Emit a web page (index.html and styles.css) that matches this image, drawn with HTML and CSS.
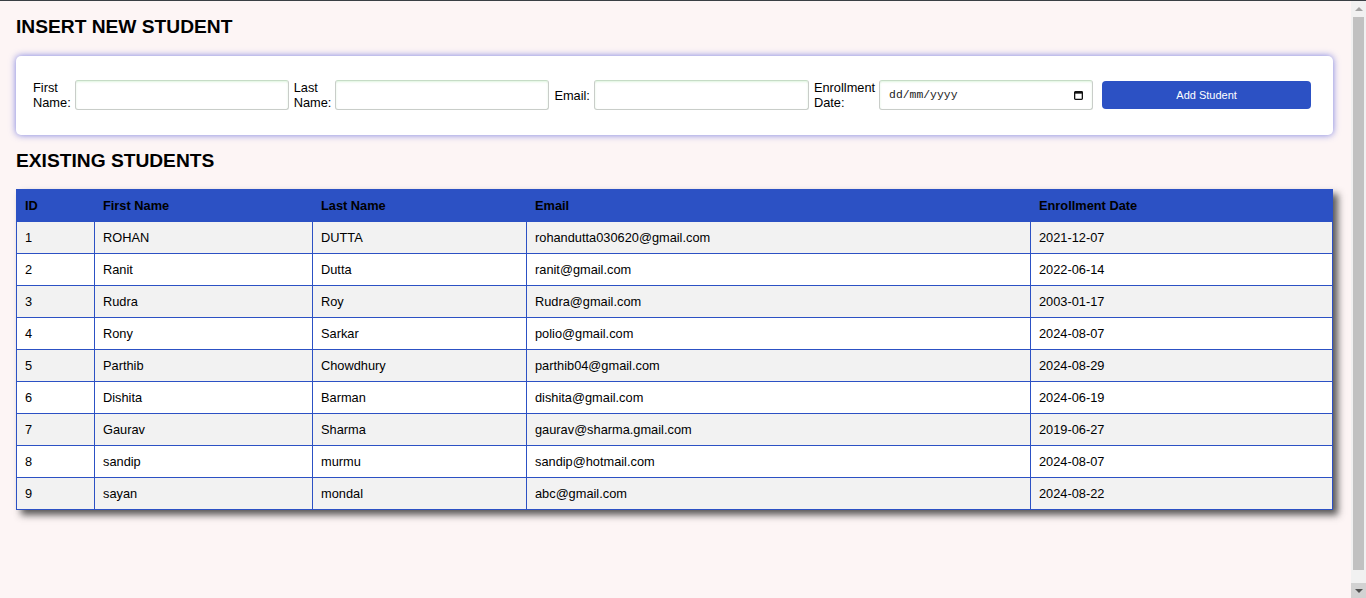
FILE: index.html
```html
<!DOCTYPE html>
<html lang="en">
<head>
<meta charset="utf-8">
<title>Students</title>
<link rel="stylesheet" href="styles.css">
</head>
<body>
<h2 class="section-title title-first">INSERT NEW STUDENT</h2>
<form class="student-form">
  <label class="field-label" for="fn">First Name:</label>
  <input class="field-input" id="fn" type="text">
  <label class="field-label" for="ln">Last Name:</label>
  <input class="field-input" id="ln" type="text">
  <label class="field-label" for="em">Email:</label>
  <input class="field-input field-email" id="em" type="email">
  <label class="field-label" for="ed">Enrollment Date:</label>
  <div class="date-box">
    <input class="date-input" id="ed" type="text" placeholder="dd/mm/yyyy">
    <svg class="cal-icon" width="9" height="9" viewBox="0 0 9 9" aria-hidden="true">
      <rect x="0.65" y="0.65" width="7.7" height="7.7" rx="0.8" fill="none" stroke="#111" stroke-width="1.3"/>
      <rect x="0.65" y="0.65" width="7.7" height="2" fill="#111"/>
    </svg>
  </div>
  <button class="add-btn" type="button">Add Student</button>
</form>
<h2 class="section-title title-second">EXISTING STUDENTS</h2>
<table class="students">
  <colgroup>
    <col class="c-id"><col class="c-first"><col class="c-last"><col class="c-email"><col class="c-date">
  </colgroup>
  <thead>
    <tr><th>ID</th><th>First Name</th><th>Last Name</th><th>Email</th><th>Enrollment Date</th></tr>
  </thead>
  <tbody>
    <tr><td>1</td><td>ROHAN</td><td>DUTTA</td><td>rohandutta030620@gmail.com</td><td>2021-12-07</td></tr>
    <tr><td>2</td><td>Ranit</td><td>Dutta</td><td>ranit@gmail.com</td><td>2022-06-14</td></tr>
    <tr><td>3</td><td>Rudra</td><td>Roy</td><td>Rudra@gmail.com</td><td>2003-01-17</td></tr>
    <tr><td>4</td><td>Rony</td><td>Sarkar</td><td>polio@gmail.com</td><td>2024-08-07</td></tr>
    <tr><td>5</td><td>Parthib</td><td>Chowdhury</td><td>parthib04@gmail.com</td><td>2024-08-29</td></tr>
    <tr><td>6</td><td>Dishita</td><td>Barman</td><td>dishita@gmail.com</td><td>2024-06-19</td></tr>
    <tr><td>7</td><td>Gaurav</td><td>Sharma</td><td>gaurav@sharma.gmail.com</td><td>2019-06-27</td></tr>
    <tr><td>8</td><td>sandip</td><td>murmu</td><td>sandip@hotmail.com</td><td>2024-08-07</td></tr>
    <tr><td>9</td><td>sayan</td><td>mondal</td><td>abc@gmail.com</td><td>2024-08-22</td></tr>
  </tbody>
</table>
<div class="fake-scrollbar" aria-hidden="true">
  <div class="sb-btn sb-up"><span class="tri tri-up"></span></div>
  <div class="sb-track"><div class="sb-thumb"></div></div>
  <div class="sb-btn sb-down"><span class="tri tri-down"></span></div>
</div>
</body>
</html>
```
FILE: styles.css
```css
html {
  border-top: 1px solid #3a3f44;
  background: #fdf5f5;
}
body {
  margin: 0;
  padding: 0 33px 60px 16px;
  font-family: "Liberation Sans", Arial, sans-serif;
  font-size: 12.8px;
  color: #000;
  background: #fdf5f5;
}
.section-title {
  font-size: 19.2px;
  line-height: 22px;
  font-weight: bold;
  margin: 0;
}
.title-first {
  padding-top: 15px;
  margin-bottom: 18px;
}
.title-second {
  margin-top: 15px;
  margin-bottom: 17px;
}
.student-form {
  display: flex;
  align-items: center;
  background: #fff;
  border-radius: 5px;
  box-shadow: 0 0 7px rgba(50, 60, 210, 0.65);
  padding: 24px 22px 25px 17px;
  height: 30px;
}
.field-label {
  width: min-content;
  line-height: 15px;
  flex: none;
  font-size: 12.8px;
}
.field-input,
.date-box {
  box-sizing: border-box;
  width: 214px;
  height: 30px;
  margin: 0 5px 0 4px;
  border: 1px solid #c9cdc9;
  border-top-color: #c6dcc6;
  border-radius: 3px;
  box-shadow: inset 0 1px 2px rgba(80, 200, 80, 0.18);
  background: #fff;
  padding: 0 8px;
  flex: none;
}
.field-email {
  width: 215px;
}
.date-box {
  display: flex;
  align-items: center;
  padding: 0 9px 0 9px;
  gap: 6px;
}
.date-input {
  flex: 1;
  min-width: 0;
  border: none;
  outline: none;
  padding: 0;
  background: transparent;
  font-family: "Liberation Mono", monospace;
  font-size: 11.4px;
  color: #222;
}
.date-input::placeholder {
  color: #222;
  opacity: 1;
}
.cal-icon {
  flex: none;
  display: block;
}
.add-btn {
  flex: none;
  width: 209px;
  height: 28px;
  margin-left: 4px;
  border: none;
  border-radius: 4px;
  background: #2c51c4;
  color: #fff;
  font-family: "Liberation Sans", Arial, sans-serif;
  font-size: 11px;
}
.students {
  width: 100%;
  border-collapse: collapse;
  table-layout: fixed;
  box-shadow: 5px 5px 7px rgba(50, 50, 50, 0.8);
  background: #fff;
}
.c-id { width: 78px; }
.c-first { width: 218px; }
.c-last { width: 214px; }
.c-email { width: 504px; }
.students th,
.students td {
  border: 1px solid #2c51c4;
  padding: 8px;
  line-height: 15px;
  text-align: left;
  font-size: 12.8px;
}
.students th {
  background: #2c51c4;
  color: #000;
  font-weight: bold;
}
.students tbody tr:nth-child(odd) td {
  background: #f2f2f2;
}
.students tbody tr:nth-child(even) td {
  background: #fff;
}
.fake-scrollbar {
  position: fixed;
  top: 1px;
  right: 0;
  bottom: 0;
  width: 15px;
  background: #f1f1f1;
  display: flex;
  flex-direction: column;
}
.sb-btn {
  height: 15px;
  flex: none;
  display: flex;
  align-items: center;
  justify-content: center;
}
.sb-down {
  background: #d2d2d2;
}
.sb-track {
  flex: 1;
  padding: 1px 2px 13px 2px;
  display: flex;
}
.sb-thumb {
  flex: 1;
  background: #c1c1c1;
}
.tri {
  width: 0;
  height: 0;
  border-left: 4px solid transparent;
  border-right: 4px solid transparent;
}
.tri-up {
  border-bottom: 4px solid #a3a3a3;
}
.tri-down {
  border-top: 4px solid #505050;
}
```
